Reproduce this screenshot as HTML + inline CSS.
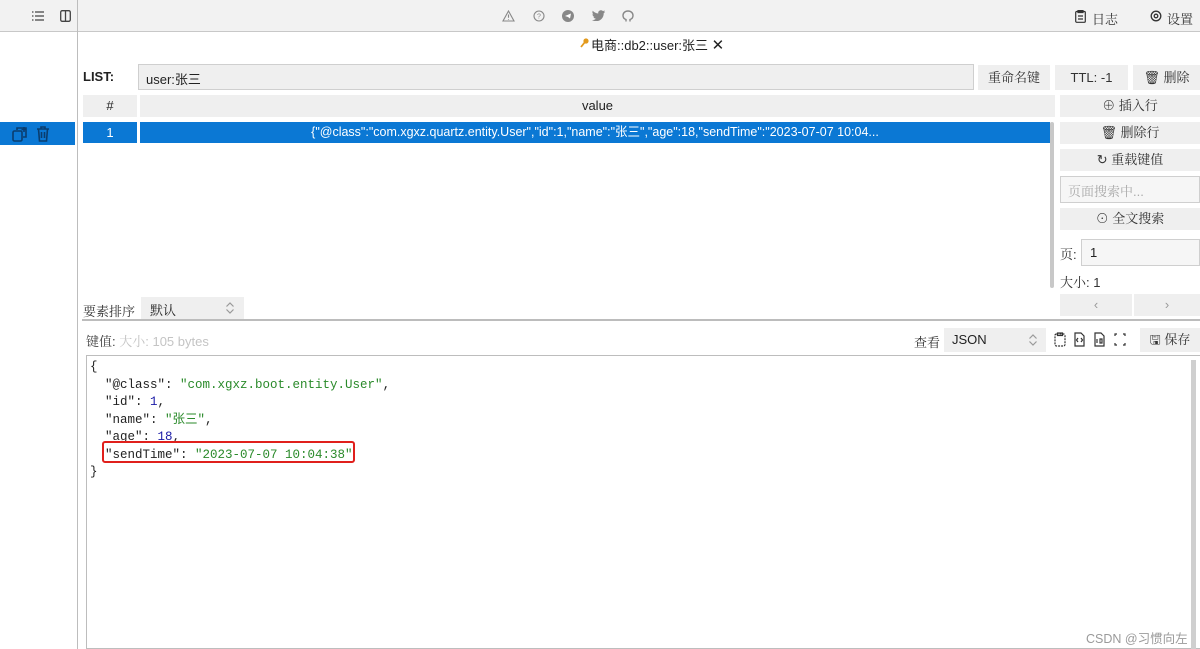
<!DOCTYPE html>
<html><head><meta charset="utf-8"><style>
*{box-sizing:border-box;margin:0;padding:0}
body{width:1200px;height:649px;overflow:hidden;background:#fff;font-family:"Liberation Sans","Noto Sans CJK SC",sans-serif;font-size:13px;color:#222;position:relative}
.a{position:absolute}
.btn{position:absolute;background:#efefef;text-align:center;line-height:22px;font-family:"Liberation Sans","Noto Serif CJK SC",serif;color:#333;font-size:13px}
.serif{font-family:"Liberation Sans","Noto Serif CJK SC",serif}
.mono{font-family:"Liberation Mono","Noto Sans CJK SC",monospace;font-size:12.5px;line-height:17.5px;white-space:pre}
.s{color:#2a8a2a}.n{color:#1a1aa6}
</style></head><body>
<div class="a" style="left:0;top:0;width:1200px;height:32px;background:#f2f2f2;border-bottom:1px solid #c8c8c8"></div>
<div class="a" style="left:77px;top:0;width:1px;height:649px;background:#bdbdbd"></div>
<svg class="a" style="left:32px;top:10px" width="12" height="12" viewBox="0 0 12 12" stroke="#444" stroke-width="1.2"><path d="M3 2h9M3 6h9M3 10h9M0 2h1.5M0 6h1.5M0 10h1.5"/></svg>
<svg class="a" style="left:60px;top:10px" width="11" height="12" viewBox="0 0 11 12" fill="none" stroke="#444" stroke-width="1.3"><rect x=".7" y=".7" width="9.6" height="10.6" rx="1.5"/><path d="M5.5 1v10"/></svg>
<svg class="a" style="left:502px;top:10px" width="13" height="12" viewBox="0 0 13 12" fill="none" stroke="#888" stroke-width="1.1"><path d="M6.5 1L12 11H1z M6.5 4.5v3.2M6.5 9v.6"/></svg>
<svg class="a" style="left:533px;top:10px" width="12" height="12" viewBox="0 0 12 12" fill="none" stroke="#888" stroke-width="1.1"><circle cx="6" cy="6" r="5"/><text x="6" y="8.5" font-size="7" text-anchor="middle" fill="#888" stroke="none">?</text></svg>
<svg class="a" style="left:562px;top:10px" width="12" height="12" viewBox="0 0 12 12"><circle cx="6" cy="6" r="6" fill="#888"/><path d="M3 6l6-2.5-1 5-2-1.5z" fill="#fff"/></svg>
<svg class="a" style="left:592px;top:10px" width="13" height="11" viewBox="0 0 13 11"><path d="M13 1.5c-.5.2-1 .4-1.5.4.6-.3 1-.9 1.2-1.5-.5.3-1.1.5-1.7.7C10.4.5 9.7.2 8.9.2 7.4.2 6.2 1.4 6.2 2.9l.1.6C4 3.4 2.1 2.4.8.8.6 1.2.4 1.7.4 2.2c0 .9.5 1.8 1.2 2.2-.4 0-.9-.1-1.2-.3 0 1.3.9 2.4 2.2 2.7-.4.1-.9.1-1.2 0 .3 1.1 1.3 1.9 2.5 1.9C2.9 9.6 1.5 10.1 0 10c1.2.8 2.6 1.2 4.1 1.2 4.9 0 7.6-4.1 7.6-7.6v-.3c.5-.4 1-.9 1.3-1.4z" fill="#888"/></svg>
<svg class="a" style="left:622px;top:10px" width="12" height="12" viewBox="0 0 12 12" fill="none" stroke="#888" stroke-width="1.4"><path d="M4 11.5V9.5C2 9 1 7.5 1 5.5 1 3 3 1 6 1s5 2 5 4.5c0 2-1 3.5-3 4v2"/></svg>
<svg class="a" style="left:1075px;top:10px" width="11" height="13" viewBox="0 0 11 13" fill="none" stroke="#333" stroke-width="1.2"><rect x=".7" y="1.5" width="9.6" height="10.8" rx="1"/><path d="M3 .5h5v2H3zM3 6h5M3 9h5"/></svg>
<div class="a serif" style="left:1092px;top:9px;font-size:13px;color:#333">日志</div>
<svg class="a" style="left:1150px;top:10px" width="12" height="12" viewBox="0 0 12 12" fill="none" stroke="#333" stroke-width="1.3"><circle cx="6" cy="6" r="4.8"/><circle cx="6" cy="6" r="1.8"/></svg>
<div class="a serif" style="left:1167px;top:9px;font-size:13px;color:#333">设置</div>
<div class="a" style="left:0;top:122px;width:75px;height:23px;background:#0b78d4"></div>
<svg class="a" style="left:12px;top:126px" width="16" height="16" viewBox="0 0 16 16" fill="none" stroke="#0a3d6e" stroke-width="1.6"><rect x="1" y="5" width="9" height="10" rx="1.5"/><path d="M5 4V2h9v9h-3"/><path d="M12 1v5M9.5 3.5h5"/></svg>
<svg class="a" style="left:36px;top:126px" width="14" height="16" viewBox="0 0 14 16" fill="none" stroke="#0a3d6e" stroke-width="1.6"><path d="M1 3h12M5 3V1h4v2M2.5 3l1 12h7l1-12M5.5 6v6M8.5 6v6"/></svg>
<svg class="a" style="left:580px;top:38px" width="9" height="10" viewBox="0 0 9 10"><circle cx="6" cy="3" r="2.6" fill="#e39a1c"/><path d="M5 4L1 9" stroke="#e39a1c" stroke-width="1.8"/></svg>
<div class="a" style="left:591px;top:35px;font-size:13px;color:#222">电商::db2::user:张三 <span style="font-size:15px">✕</span></div>
<div class="a" style="left:83px;top:69px;font-weight:bold;font-size:13px">LIST:</div>
<div class="a" style="left:138px;top:64px;width:836px;height:26px;background:#efefef;border:1px solid #cfcfcf;padding:4px 7px;font-size:13px">user:张三</div>
<div class="btn" style="left:978px;top:65px;width:72px;height:25px;line-height:25px">重命名键</div>
<div class="btn" style="left:1055px;top:65px;width:73px;height:25px;line-height:25px">TTL: -1</div>
<div class="btn" style="left:1133px;top:65px;width:67px;height:25px;line-height:25px">🗑&#xFE0E; 删除</div>
<div class="a" style="left:83px;top:95px;width:54px;height:22px;background:#efefef;text-align:center;line-height:22px">#</div>
<div class="a" style="left:140px;top:95px;width:915px;height:22px;background:#efefef;text-align:center;line-height:22px">value</div>
<div class="a" style="left:83px;top:122px;width:54px;height:21px;background:#0b78d4;color:#fff;text-align:center;line-height:21px">1</div>
<div class="a" style="left:140px;top:122px;width:910px;height:21px;background:#0b78d4;color:#fff;text-align:center;line-height:21px;font-size:12.5px">{"@class":"com.xgxz.quartz.entity.User","id":1,"name":"张三","age":18,"sendTime":"2023-07-07 10:04...</div>
<div class="a" style="left:1050px;top:122px;width:4px;height:166px;background:#c8c8c8;border-radius:2px"></div>
<div class="btn" style="left:1060px;top:95px;width:140px">⊕ 插入行</div>
<div class="btn" style="left:1060px;top:122px;width:140px">🗑&#xFE0E; 删除行</div>
<div class="btn" style="left:1060px;top:149px;width:140px">↻ 重载键值</div>
<div class="a serif" style="left:1060px;top:176px;width:140px;height:27px;border:1px solid #cfcfcf;background:#f6f6f6;color:#aaa;padding:4px 7px">页面搜索中...</div>
<div class="btn" style="left:1060px;top:208px;width:140px">⊙ 全文搜索</div>
<div class="a serif" style="left:1060px;top:244px;color:#333">页:</div>
<div class="a" style="left:1081px;top:239px;width:119px;height:27px;border:1px solid #cfcfcf;background:#f6f6f6;padding:5px 8px">1</div>
<div class="a serif" style="left:1060px;top:272px;color:#333">大小: 1</div>
<div class="btn" style="left:1060px;top:294px;width:72px;color:#999">‹</div>
<div class="btn" style="left:1134px;top:294px;width:66px;color:#999">›</div>
<div class="a serif" style="left:83px;top:301px;color:#333">要素排序</div>
<div class="a" style="left:141px;top:297px;width:103px;height:22px;background:#efefef;padding:3px 9px"><span class="serif">默认</span></div>
<svg class="a" style="left:225px;top:301px" width="10" height="14" viewBox="0 0 10 14" fill="none" stroke="#999" stroke-width="1.2"><path d="M1.5 5.5L5 2l3.5 3.5M1.5 8.5L5 12l3.5-3.5"/></svg>
<div class="a" style="left:82px;top:319px;width:1118px;height:2px;background:#bcbcbc"></div>
<div class="a serif" style="left:86px;top:331px;color:#444">键值: <span style="color:#c4c4c4">大小: 105 bytes</span></div>
<div class="a serif" style="left:914px;top:332px;color:#333">查看</div>
<div class="a" style="left:944px;top:328px;width:102px;height:24px;background:#efefef;padding:4px 8px">JSON</div>
<svg class="a" style="left:1028px;top:333px" width="10" height="14" viewBox="0 0 10 14" fill="none" stroke="#999" stroke-width="1.2"><path d="M1.5 5.5L5 2l3.5 3.5M1.5 8.5L5 12l3.5-3.5"/></svg>
<svg class="a" style="left:1054px;top:332px" width="76" height="15" viewBox="0 0 76 15" fill="none" stroke="#333" stroke-width="1.2"><rect x="1" y="2" width="10" height="12" rx="1.5" stroke-dasharray="2 1"/><rect x="3.5" y="1" width="5" height="2.5"/><path d="M21 1h6l3 3v10h-9zM24 6l-1.5 2 1.5 2M27 6l1.5 2-1.5 2"/><path d="M41 1h6l3 3v10h-9zM43 7v4M46 7h2v4h-2z"/><path d="M63 2h-2v2M69 2h2v2M63 13h-2v-2M69 13h2v-2"/></svg>
<div class="btn" style="left:1140px;top:328px;width:60px;height:24px;line-height:24px">🖫 保存</div>
<div class="a" style="left:86px;top:355px;width:1114px;height:294px;border:1px solid #bdbdbd;border-right:none"></div>
<div class="a" style="left:1191px;top:360px;width:5px;height:289px;background:#cfcfcf"></div>
<div class="a mono" style="left:90px;top:359px">{
  "@class": <span class="s">"com.xgxz.boot.entity.User"</span>,
  "id": <span class="n">1</span>,
  "name": <span class="s">"张三"</span>,
  "age": <span class="n">18</span>,
  "sendTime": <span class="s">"2023-07-07 10:04:38"</span>
}</div>
<div class="a" style="left:102px;top:441px;width:253px;height:22px;border:2px solid #e0201c;border-radius:3px"></div>
<div class="a" style="left:1086px;top:628px;color:#9a9a9a;font-size:12.5px">CSDN @习惯向左</div>
</body></html>
